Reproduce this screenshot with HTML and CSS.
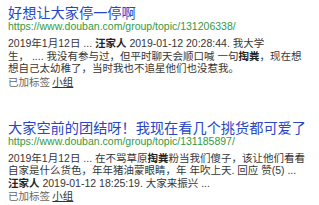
FILE: index.html
```html
<!DOCTYPE html>
<html lang="zh-CN">
<head>
<meta charset="utf-8">
<link rel="stylesheet" href="styles.css">
</head>
<body>
<div class="results">
  <div class="result">
    <div class="title">好想让大家停一停啊</div>
    <div class="url">https://www.douban.com/group/topic/131206338/</div>
    <div class="snippet">
      <span class="line">2019年1月12日 ... <b>汪家人</b> 2019-01-12 20:28:44. 我大学</span>
      <span class="line">生， .... 我没有参与过，但平时聊天会顺口喊 一句<b>掏粪</b>，现在想</span>
      <span class="line">想自己太幼稚了，当时我也不追星他们也没惹我。</span>
    </div>
    <div class="tags">已加标签 <span class="tag">小组</span></div>
  </div>
  <div class="result">
    <div class="title">大家空前的团结呀！我现在看几个挑货都可爱了</div>
    <div class="url">https://www.douban.com/group/topic/131185897/</div>
    <div class="snippet">
      <span class="line">2019年1月12日 ... 在不骂草原<b>掏粪</b>粉当我们傻子，该让他们看看</span>
      <span class="line">自家是什么货色，年年猪油蒙眼睛，年 年吹上天. 回应 赞(5) ...</span>
      <span class="line"><b>汪家人</b> 2019-01-12 18:25:19. 大家来振兴 ...</span>
    </div>
    <div class="tags">已加标签 <span class="tag">小组</span></div>
  </div>
</div>
</body>
</html>
```
FILE: styles.css
```css
html, body {
  margin: 0;
  padding: 0;
  background: #ffffff;
}
body {
  font-family: "Liberation Sans", "Noto Sans CJK SC", sans-serif;
  color: #3b3b3b;
}
.results {
  display: flex;
  flex-direction: column;
  gap: 31px;
  padding: 4px 8px 0 8px;
}
.result {
  display: flex;
  flex-direction: column;
}
.title {
  font-family: "Noto Sans CJK SC", sans-serif;
  font-size: 14.2px;
  line-height: 16px;
  color: #2846c4;
  white-space: nowrap;
}
.url {
  font-size: 10.5px;
  line-height: 12px;
  color: #34993f;
  white-space: nowrap;
  margin-bottom: 5px;
}
.snippet {
  display: flex;
  flex-direction: column;
  font-family: "Liberation Sans", "Noto Sans CJK SC", sans-serif;
  font-size: 10.5px;
  line-height: 12.5px;
  color: #363636;
}
.line {
  display: block;
  white-space: nowrap;
}
.snippet b {
  color: #222;
}
.tags {
  font-family: "Noto Sans CJK SC", sans-serif;
  font-size: 10.5px;
  line-height: 13px;
  color: #666;
}
.tag {
  color: #333;
  text-decoration: underline;
}
```
